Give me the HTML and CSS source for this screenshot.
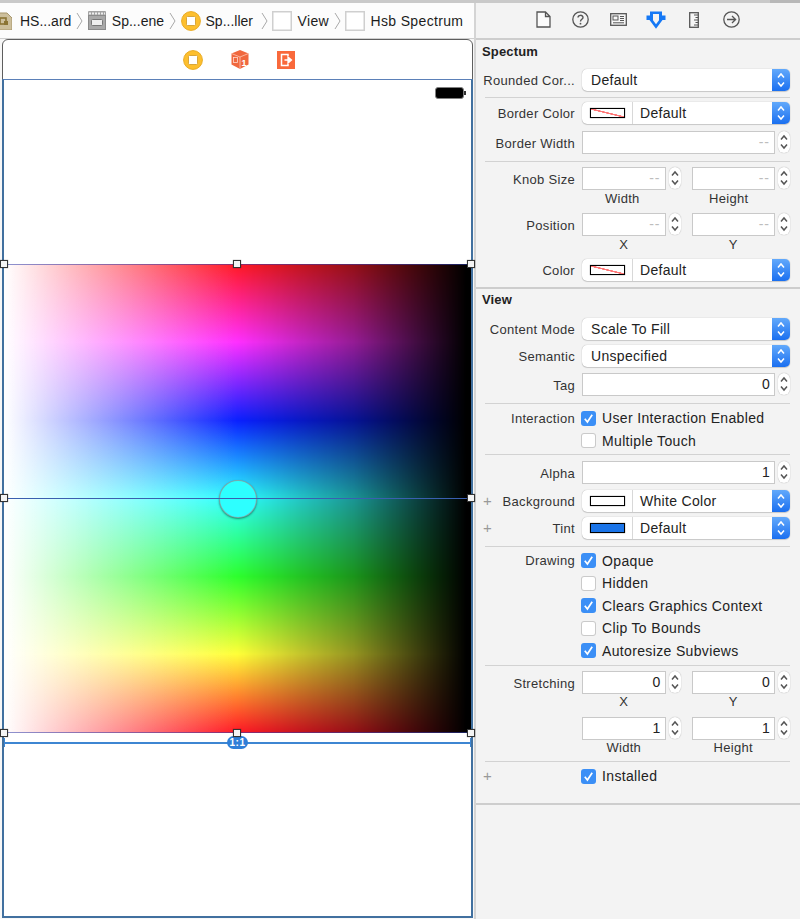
FILE: index.html
```html
<!DOCTYPE html>
<html lang="en">
<head>
    <meta charset="UTF-8">
    <meta name="viewport" content="width=device-width, initial-scale=1.0">
    <title>Hsb Spectrum</title>
    <link rel="stylesheet" href="styles.css">
</head>
<body>
    <svg class="sprite" xmlns="http://www.w3.org/2000/svg">
        <symbol id="updown" viewBox="0 0 12 22">
            <path d="M3 8.5 L6 5 L9 8.5 M3 13.5 L6 17 L9 13.5" fill="none" stroke="currentColor" stroke-width="1.5"/>
        </symbol>
        <symbol id="tick" viewBox="0 0 15 15">
            <path d="M3.8 7.8 L6.4 11 L11.2 3.8" fill="none" stroke="#fff" stroke-width="1.7"/>
        </symbol>
        <symbol id="chevron" viewBox="0 0 7 18">
            <path d="M1 1 L6 9 L1 17" fill="none" stroke="#a9a9a9" stroke-width="1"/>
        </symbol>
        <symbol id="vc" viewBox="0 0 20 20">
            <circle cx="10" cy="10" r="9.4" fill="#fdbf2e" stroke="#e9ab24" stroke-width="1"/>
            <rect x="5.5" y="5.5" width="9" height="9" rx="1" fill="#fff" stroke="#d8a63a" stroke-width="1"/>
        </symbol>
        <symbol id="viewbox" viewBox="0 0 20 20">
            <rect x="0.75" y="0.75" width="18.5" height="18.5" fill="#fff" stroke="#cfcfcf" stroke-width="1.5"/>
        </symbol>
    </svg>

    <div class="top-strip"></div>
    <div class="window">
        <main class="editor">
            <nav class="crumbs">
                <svg class="crumb-story" width="14" height="18" viewBox="0 0 14 18">
                    <path d="M0 1 H9 L14 6 V18 H0 Z" fill="#cdbf9c" stroke="#a8976d" stroke-width="1"/>
                    <rect x="2" y="6" width="6" height="6" fill="none" stroke="#8b7434" stroke-width="1.6"/>
                    <rect x="6" y="9" width="4" height="4" fill="#8b7434"/>
                </svg>
                <span class="crumb-text crumb-short crumb-first">HS...ard</span>
                <svg class="chev" width="7" height="18"><use href="#chevron"/></svg>
                <svg class="crumb-icon" width="18" height="19" viewBox="0 0 18 19">
                    <rect x="0" y="0" width="18" height="19" rx="1" fill="#a3a3a3"/>
                    <path d="M1 2.5 H17" stroke="#eee" stroke-width="2" stroke-dasharray="2 1"/>
                    <rect x="0.5" y="4.5" width="17" height="14" fill="#a8a8a8" stroke="#8a8a8a"/>
                    <rect x="3.5" y="8.5" width="11" height="6" rx="1" fill="#eee" stroke="#777"/>
                </svg>
                <span class="crumb-text crumb-short crumb-scene">Sp...ene</span>
                <svg class="chev" width="7" height="18"><use href="#chevron"/></svg>
                <svg class="crumb-icon" width="20" height="20"><use href="#vc"/></svg>
                <span class="crumb-text crumb-short crumb-ctrl">Sp...ller</span>
                <svg class="chev" width="7" height="18"><use href="#chevron"/></svg>
                <svg class="crumb-icon" width="20" height="20"><use href="#viewbox"/></svg>
                <span class="crumb-text">View</span>
                <svg class="chev" width="7" height="18"><use href="#chevron"/></svg>
                <svg class="crumb-icon" width="20" height="20"><use href="#viewbox"/></svg>
                <span class="crumb-text">Hsb Spectrum</span>
            </nav>

            <section class="scene">
                <div class="dock">
                    <svg width="20" height="20"><use href="#vc"/></svg>
                    <svg width="18" height="19" viewBox="0 0 18 19">
                        <path d="M9 0 L17.5 3.5 V14.5 L9 19 L0.5 14.5 V3.5 Z" fill="#f0683e"/>
                        <path d="M0.5 3.5 L9 7 L17.5 3.5 M9 7 V19" fill="none" stroke="#ffc9b5" stroke-width="0.8"/>
                        <rect x="2.5" y="7.5" width="4" height="5" fill="none" stroke="#ffd9cc" stroke-width="0.8"/>
                        <text x="10.4" y="16" class="cube-num">1</text>
                    </svg>
                    <svg width="18" height="18" viewBox="0 0 18 18">
                        <rect width="18" height="18" fill="#f9693b"/>
                        <path d="M11 5 V3.5 H4.5 V14.5 H11 V13" fill="none" stroke="#fff" stroke-width="1.5"/>
                        <path d="M7.5 9 H12 M11 6 L14.5 9 L11 12 Z" fill="#fff" stroke="#fff" stroke-width="1.3"/>
                    </svg>
                </div>
                <div class="device">
                    <div class="status-area">
                        <div class="battery"></div>
                    </div>
                    <div class="spectrum">
                        <span class="guide"></span>
                        <span class="knob"></span>
                        <span class="handle h-tl"></span>
                        <span class="handle h-tc"></span>
                        <span class="handle h-tr"></span>
                        <span class="handle h-ml"></span>
                        <span class="handle h-mr"></span>
                        <span class="handle h-bl"></span>
                        <span class="handle h-bc"></span>
                        <span class="handle h-br"></span>
                    </div>
                    <div class="below">
                        <span class="constraint"></span>
                        <span class="ratio">1:1</span>
                    </div>
                </div>
            </section>
        </main>

        <aside class="inspector">
            <div class="tabs">
                <svg width="15" height="17" viewBox="0 0 15 17"><path d="M1 1 H9.5 L14 5.5 V16 H1 Z M9.5 1 V5.5 H14" fill="#fbfbfb" stroke="#555" stroke-width="1.3"/></svg>
                <svg width="17" height="17" viewBox="0 0 17 17"><circle cx="8.5" cy="8.5" r="7.7" fill="none" stroke="#555" stroke-width="1.3"/><path d="M6 6.6 C6 3.6 11 3.6 11 6.4 C11 8.2 8.5 8.2 8.5 10.4" fill="none" stroke="#555" stroke-width="1.4"/><circle cx="8.5" cy="12.7" r="0.9" fill="#555"/></svg>
                <svg width="17" height="13" viewBox="0 0 17 13"><rect x="0.7" y="0.7" width="15.6" height="11.6" fill="#f6f6f6" stroke="#555" stroke-width="1.3"/><rect x="3" y="3" width="5" height="4" fill="none" stroke="#555"/><path d="M10 3.5 H14 M10 5.5 H14 M10 7.5 H14 M3 9.8 H14" stroke="#555"/></svg>
                <svg class="tab-attrs" width="20" height="18" viewBox="0 0 20 18"><path fill-rule="evenodd" d="M4 0.5 H16 V4.5 H19.5 V9 H16.5 L10 17.8 L3.5 9 H0.5 V4.5 H4 Z M7 3 V9.2 L10 13.3 L13 9.2 V3 Z" fill="#1578f5"/></svg>
                <svg class="tab-size" width="10" height="16" viewBox="0 0 10 16"><rect x="0.7" y="0.7" width="8.6" height="14.6" fill="#f6f6f6" stroke="#555" stroke-width="1.3"/><path d="M5 3 H9 M6.5 5.5 H9 M5 8 H9 M6.5 10.5 H9 M5 13 H9" stroke="#555"/></svg>
                <svg class="tab-conn" width="17" height="17" viewBox="0 0 17 17"><circle cx="8.5" cy="8.5" r="7.7" fill="none" stroke="#555" stroke-width="1.3"/><path d="M4 8.5 H12.5 M9 5 L12.6 8.5 L9 12" fill="none" stroke="#555" stroke-width="1.3"/></svg>
            </div>

            <div class="group group-rounded">
                <h3>Spectum</h3>
                <div class="row row-first">
                    <label class="label">Rounded Cor...</label>
                    <div class="select"><span class="select-text">Default</span><span class="arrows"><svg width="12" height="22"><use href="#updown"/></svg></span></div>
                </div>
            </div>
            <div class="group group-border">
                <div class="row">
                    <label class="label">Border Color</label>
                    <div class="select">
                        <span class="swatch-cell"><span class="swatch swatch-none"></span></span>
                        <span class="select-text">Default</span>
                        <span class="arrows"><svg width="12" height="22"><use href="#updown"/></svg></span>
                    </div>
                </div>
                <div class="row row-input">
                    <label class="label">Border Width</label>
                    <div class="field"><span class="input is-empty">--</span><span class="stepper"><svg width="12" height="22"><use href="#updown"/></svg></span></div>
                </div>
            </div>
            <div class="group group-knob">
                <div class="row row-input">
                    <label class="label">Knob Size</label>
                    <div class="pair">
                        <div class="field"><span class="input is-empty">--</span><span class="stepper"><svg width="12" height="22"><use href="#updown"/></svg></span></div>
                        <div class="field"><span class="input is-empty">--</span><span class="stepper"><svg width="12" height="22"><use href="#updown"/></svg></span></div>
                    </div>
                </div>
                <div class="captions"><span>Width</span><span class="caption-shift">Height</span></div>
                <div class="row row-input row-after-caption">
                    <label class="label">Position</label>
                    <div class="pair">
                        <div class="field"><span class="input is-empty">--</span><span class="stepper"><svg width="12" height="22"><use href="#updown"/></svg></span></div>
                        <div class="field"><span class="input is-empty">--</span><span class="stepper"><svg width="12" height="22"><use href="#updown"/></svg></span></div>
                    </div>
                </div>
                <div class="captions"><span>X</span><span>Y</span></div>
                <div class="row row-after-caption">
                    <label class="label">Color</label>
                    <div class="select">
                        <span class="swatch-cell"><span class="swatch swatch-none"></span></span>
                        <span class="select-text">Default</span>
                        <span class="arrows"><svg width="12" height="22"><use href="#updown"/></svg></span>
                    </div>
                </div>
            </div>

            <div class="group group-view">
                <h3>View</h3>
                <div class="row row-first">
                    <label class="label">Content Mode</label>
                    <div class="select"><span class="select-text">Scale To Fill</span><span class="arrows"><svg width="12" height="22"><use href="#updown"/></svg></span></div>
                </div>
                <div class="row row-tight">
                    <label class="label">Semantic</label>
                    <div class="select"><span class="select-text">Unspecified</span><span class="arrows"><svg width="12" height="22"><use href="#updown"/></svg></span></div>
                </div>
                <div class="row row-input row-loose">
                    <label class="label">Tag</label>
                    <div class="field"><span class="input">0</span><span class="stepper"><svg width="12" height="22"><use href="#updown"/></svg></span></div>
                </div>
            </div>
            <div class="group group-interaction">
                <div class="check-row"><label class="label">Interaction</label><span class="check is-on"><svg width="15" height="15"><use href="#tick"/></svg></span><span>User Interaction Enabled</span></div>
                <div class="check-row"><label class="label"></label><span class="check"></span><span>Multiple Touch</span></div>
            </div>
            <div class="group group-alpha">
                <div class="row row-input">
                    <label class="label">Alpha</label>
                    <div class="field"><span class="input">1</span><span class="stepper"><svg width="12" height="22"><use href="#updown"/></svg></span></div>
                </div>
                <div class="row row-loose">
                    <label class="label"><span class="plus">+</span>Background</label>
                    <div class="select">
                        <span class="swatch-cell"><span class="swatch"></span></span>
                        <span class="select-text">White Color</span>
                        <span class="arrows"><svg width="12" height="22"><use href="#updown"/></svg></span>
                    </div>
                </div>
                <div class="row row-tight">
                    <label class="label"><span class="plus">+</span>Tint</label>
                    <div class="select">
                        <span class="swatch-cell"><span class="swatch swatch-tint"></span></span>
                        <span class="select-text">Default</span>
                        <span class="arrows"><svg width="12" height="22"><use href="#updown"/></svg></span>
                    </div>
                </div>
            </div>
            <div class="group group-drawing">
                <div class="check-row"><label class="label">Drawing</label><span class="check is-on"><svg width="15" height="15"><use href="#tick"/></svg></span><span>Opaque</span></div>
                <div class="check-row"><label class="label"></label><span class="check"></span><span>Hidden</span></div>
                <div class="check-row"><label class="label"></label><span class="check is-on"><svg width="15" height="15"><use href="#tick"/></svg></span><span>Clears Graphics Context</span></div>
                <div class="check-row"><label class="label"></label><span class="check"></span><span>Clip To Bounds</span></div>
                <div class="check-row"><label class="label"></label><span class="check is-on"><svg width="15" height="15"><use href="#tick"/></svg></span><span>Autoresize Subviews</span></div>
            </div>
            <div class="group group-stretch">
                <div class="row row-input">
                    <label class="label">Stretching</label>
                    <div class="pair">
                        <div class="field"><span class="input">0</span><span class="stepper"><svg width="12" height="22"><use href="#updown"/></svg></span></div>
                        <div class="field"><span class="input">0</span><span class="stepper"><svg width="12" height="22"><use href="#updown"/></svg></span></div>
                    </div>
                </div>
                <div class="captions"><span>X</span><span>Y</span></div>
                <div class="row row-input row-after-caption">
                    <label class="label"></label>
                    <div class="pair">
                        <div class="field"><span class="input">1</span><span class="stepper"><svg width="12" height="22"><use href="#updown"/></svg></span></div>
                        <div class="field"><span class="input">1</span><span class="stepper"><svg width="12" height="22"><use href="#updown"/></svg></span></div>
                    </div>
                </div>
                <div class="captions"><span>Width</span><span>Height</span></div>
            </div>
            <div class="group group-installed">
                <div class="check-row"><label class="label"><span class="plus">+</span></label><span class="check is-on"><svg width="15" height="15"><use href="#tick"/></svg></span><span>Installed</span></div>
            </div>
        </aside>
    </div>
</body>
</html>
```

FILE: styles.css
```css
* {
    box-sizing: border-box;
}
html, body {
    height: 100%;
}
body {
    margin: 0;
    display: flex;
    flex-direction: column;
    overflow: hidden;
    font-family: "Liberation Sans", Arial, sans-serif;
    font-size: 13px;
    letter-spacing: 0.3px;
    color: #2a2a2a;
    background: #f3f3f3;
}
.sprite {
    display: none;
}
.top-strip {
    height: 3px;
    flex: none;
    background: linear-gradient(to right, #c9c9c9 770px, #b8b8b8 770px);
}
.window {
    flex: 1;
    display: flex;
    min-height: 0;
}

/* left side: breadcrumb and storyboard */
.editor {
    width: 474px;
    flex: none;
    display: flex;
    flex-direction: column;
    background: #f7f7f7;
}
.crumbs {
    height: 36px;
    flex: none;
    display: flex;
    align-items: center;
    background: #fcfcfc;
    border-bottom: 1px solid #cfcfcf;
    font-size: 14px;
    letter-spacing: 0.35px;
    color: #1c1c1c;
    white-space: nowrap;
}
.crumb-story {
    margin-left: -2px;
    flex: none;
}
.crumb-icon {
    flex: none;
}
.crumb-text {
    margin-left: 5px;
}
.crumb-short {
    letter-spacing: 0;
}
.crumb-first {
    margin-left: 8px;
}
.crumb-scene {
    margin-left: 6px;
}
.crumb-ctrl {
    margin-right: 3px;
}
.chev {
    margin: 0 4.5px 0 5px;
    flex: none;
}
.scene {
    flex: 1;
    margin: 0 1px 1px 2px;
    display: flex;
    flex-direction: column;
    border: 1px solid #5e5e5e;
    border-radius: 6px 6px 0 0;
    background: #fff;
}
.dock {
    height: 39px;
    flex: none;
    display: flex;
    align-items: center;
    justify-content: center;
    gap: 28px;
    padding-left: 2px;
}
.cube-num {
    font-size: 9px;
    font-weight: bold;
    fill: #fff;
    letter-spacing: 0;
}
.device {
    flex: 1;
    display: flex;
    flex-direction: column;
    margin: 0 -1px -1px;
    background: #fff;
    border: 2px solid #41709f;
    border-top: 1px solid #5b80b8;
}
.status-area {
    height: 184px;
    flex: none;
    display: flex;
    justify-content: flex-end;
    padding: 7px 7px 0 0;
}
.battery {
    position: relative;
    width: 29px;
    height: 12px;
    background: #000;
    border: 1px solid #808080;
    border-radius: 3px;
}
.battery::after {
    content: "";
    position: absolute;
    right: -3px;
    top: 3px;
    width: 2px;
    height: 4px;
    background: #333;
}

/* the hue field: white to the left, black to the right */
.spectrum {
    position: relative;
    height: 469px;
    flex: none;
    border-top: 1px solid rgba(50, 60, 170, 0.55);
    border-bottom: 1px solid rgba(50, 60, 170, 0.55);
    background:
        linear-gradient(to right, #fff 0, rgba(255, 255, 255, 0) 50%),
        linear-gradient(to right, rgba(0, 0, 0, 0) 50%, rgba(0, 0, 0, 0.42) 75%, #000 99%),
        linear-gradient(to bottom, #ff1a26 0, #ff2fff 16.5%, #0a20ff 33.3%, #2dffff 50%, #2dff2d 66.7%, #ffff38 83.3%, #ff1a26 100%);
}
.guide {
    position: absolute;
    left: -2px;
    right: -2px;
    top: 233px;
    height: 1px;
    background: #3a5fb0;
    z-index: 2;
}
.knob {
    position: absolute;
    left: 215px;
    top: 215px;
    width: 38px;
    height: 38px;
    border-radius: 50%;
    background: #2dffff;
    border: 1px solid rgba(140, 150, 150, 0.8);
    box-shadow: 0 1px 2px rgba(0, 0, 0, 0.45);
}
.handle {
    position: absolute;
    width: 8px;
    height: 8px;
    background: #f4f4f4;
    border: 1px solid #333;
    box-shadow: 0 0 1px rgba(0, 0, 0, 0.5);
    z-index: 3;
}
.h-tl { left: -4px; top: -5px; }
.h-tc { left: 229px; top: -5px; }
.h-tr { right: -4px; top: -5px; }
.h-ml { left: -4px; top: 229px; }
.h-mr { right: -4px; top: 229px; }
.h-bl { left: -4px; bottom: -5px; }
.h-bc { left: 229px; bottom: -5px; }
.h-br { right: -4px; bottom: -5px; }
.below {
    position: relative;
    flex: 1;
}
.constraint {
    position: absolute;
    left: 0;
    right: 0;
    top: 9px;
    height: 2px;
    background: #3d86d2;
}
.constraint::before,
.constraint::after {
    content: "";
    position: absolute;
    top: -4px;
    width: 1px;
    height: 9px;
    background: #3d86d2;
}
.constraint::before { left: 0; }
.constraint::after { right: 0; }
.ratio {
    position: absolute;
    left: 223px;
    top: 3px;
    width: 21px;
    height: 13px;
    border-radius: 7px;
    background: #2f7fd8;
    color: #fff;
    font-size: 10px;
    font-weight: bold;
    letter-spacing: 0.5px;
    line-height: 13px;
    text-align: center;
}

/* right side: attributes inspector */
.inspector {
    width: 326px;
    flex: none;
    border-left: 2px solid #d4d4d4;
    background: #f3f3f3;
}
.tabs {
    height: 37px;
    display: flex;
    align-items: center;
    border-bottom: 2px solid #cdcdcd;
    padding: 0 0 2px 60px;
    gap: 21px;
}
.tab-attrs { margin-left: -2px; }
.tab-size { margin-left: 2px; }
.tab-conn { margin-left: 3px; }
.group {
    padding-left: 5px;
    padding-right: 10px;
}
.group::after {
    content: "";
    display: block;
    height: 1px;
    margin-left: 4px;
    background: #d2d2d2;
}
h3 {
    margin: 0;
    height: 16px;
    padding-left: 1px;
    font-size: 13px;
    line-height: 16px;
    letter-spacing: 0.15px;
    color: #222;
}
.group-rounded { padding-top: 4px; }
.group-rounded::after { margin-top: 6px; }
.group-border { padding-top: 4px; }
.group-border::after { margin-top: 7px; }
.group-knob { padding-top: 5px; padding-bottom: 6px; border-bottom: 2px solid #cdcdcd; }
.group-knob::after { display: none; }
.group-view { padding-top: 3px; }
.group-view::after { margin-top: 7px; }
.group-interaction { padding-top: 3px; }
.group-interaction::after { margin-top: 2px; }
.group-alpha { padding-top: 6px; }
.group-alpha::after { margin-top: 7px; }
.group-drawing { padding-top: 2.5px; }
.group-drawing::after { margin-top: 3px; }
.group-stretch { padding-top: 5px; }
.group-stretch::after { margin-top: 6px; }
.group-installed { padding-top: 3px; padding-bottom: 15px; border-bottom: 2px solid #cdcdcd; }
.group-installed::after { display: none; }

.row {
    display: flex;
    align-items: center;
    gap: 7px;
    height: 22px;
}
.row-input { height: 23px; }
.row-input .label { padding-top: 1px; }
.row-first { margin-top: 9px; }
.row-tight { margin-top: 5px; }
.row-loose { margin-top: 6px; }
.row-after-caption { margin-top: 8px; }
.group-view .row-first { margin-top: 10px; }
.group-border .row-input { margin-top: 7px; }
.label {
    position: relative;
    width: 94px;
    min-height: 15px;
    flex: none;
    text-align: right;
    color: #333;
    white-space: nowrap;
}
.plus {
    position: absolute;
    left: 2px;
    top: -2px;
    color: #999;
    font-size: 15px;
}
.select {
    flex: 1;
    height: 22px;
    display: flex;
    align-items: center;
    background: #fff;
    border-radius: 5px;
    box-shadow: 0 0 1px rgba(0, 0, 0, 0.35), 0 1px 1px rgba(0, 0, 0, 0.15);
    overflow: hidden;
    font-size: 14px;
    color: #222;
}
.select-text {
    flex: 1;
    padding-left: 9px;
}
.swatch-cell {
    width: 51px;
    height: 22px;
    flex: none;
    display: flex;
    align-items: center;
    justify-content: center;
    border-right: 1px solid #d8d8d8;
}
.swatch-cell + .select-text {
    padding-left: 7px;
}
.swatch {
    width: 35px;
    height: 10px;
    border: 1px solid #000;
    background: #fff;
    box-shadow: 0 0 1px rgba(0, 0, 0, 0.6);
}
.swatch-none {
    background: linear-gradient(to top right, #fff 44%, #f77 46%, #f77 54%, #fff 56%);
}
.swatch-tint {
    background: #1a74e8;
}
.arrows {
    width: 18px;
    height: 22px;
    flex: none;
    display: flex;
    justify-content: center;
    color: #fff;
    background: linear-gradient(to bottom, #62a9fb, #1a6ff0);
}
.field {
    flex: 1;
    height: 23px;
    display: flex;
    gap: 3px;
    min-width: 0;
}
.input {
    flex: 1;
    min-width: 0;
    height: 23px;
    line-height: 21px;
    padding-right: 4px;
    text-align: right;
    font-size: 14px;
    color: #222;
    background: #fff;
    border: 1px solid #c9c9c9;
}
.is-empty {
    color: #bdbdbd;
    letter-spacing: 1px;
}
.stepper {
    width: 12px;
    height: 22px;
    flex: none;
    color: #555;
    background: #fff;
    border-radius: 6px;
    box-shadow: 0 0 1px rgba(0, 0, 0, 0.4);
    display: flex;
}
.pair {
    flex: 1;
    display: flex;
    gap: 11px;
}
.captions {
    display: flex;
    gap: 26px;
    height: 15px;
    line-height: 15px;
    margin-left: 101px;
    margin-right: 15px;
    color: #333;
}
.group-knob .captions {
    line-height: 17px;
}
.captions span {
    flex: 1;
    text-align: center;
}
.captions .caption-shift {
    padding-right: 6px;
}
.check-row {
    display: flex;
    align-items: center;
    height: 22.5px;
    font-size: 14px;
    letter-spacing: 0.35px;
    color: #222;
}
.check-row .label {
    font-size: 13px;
    letter-spacing: 0.3px;
    margin-right: 6px;
}
.check {
    width: 15px;
    height: 15px;
    flex: none;
    margin-right: 6px;
    border-radius: 3px;
    background: #fff;
    box-shadow: inset 0 0 0 1px #cacaca;
}
.check svg {
    display: block;
}
.check.is-on {
    background: #3b8ff6;
    box-shadow: none;
}
```
